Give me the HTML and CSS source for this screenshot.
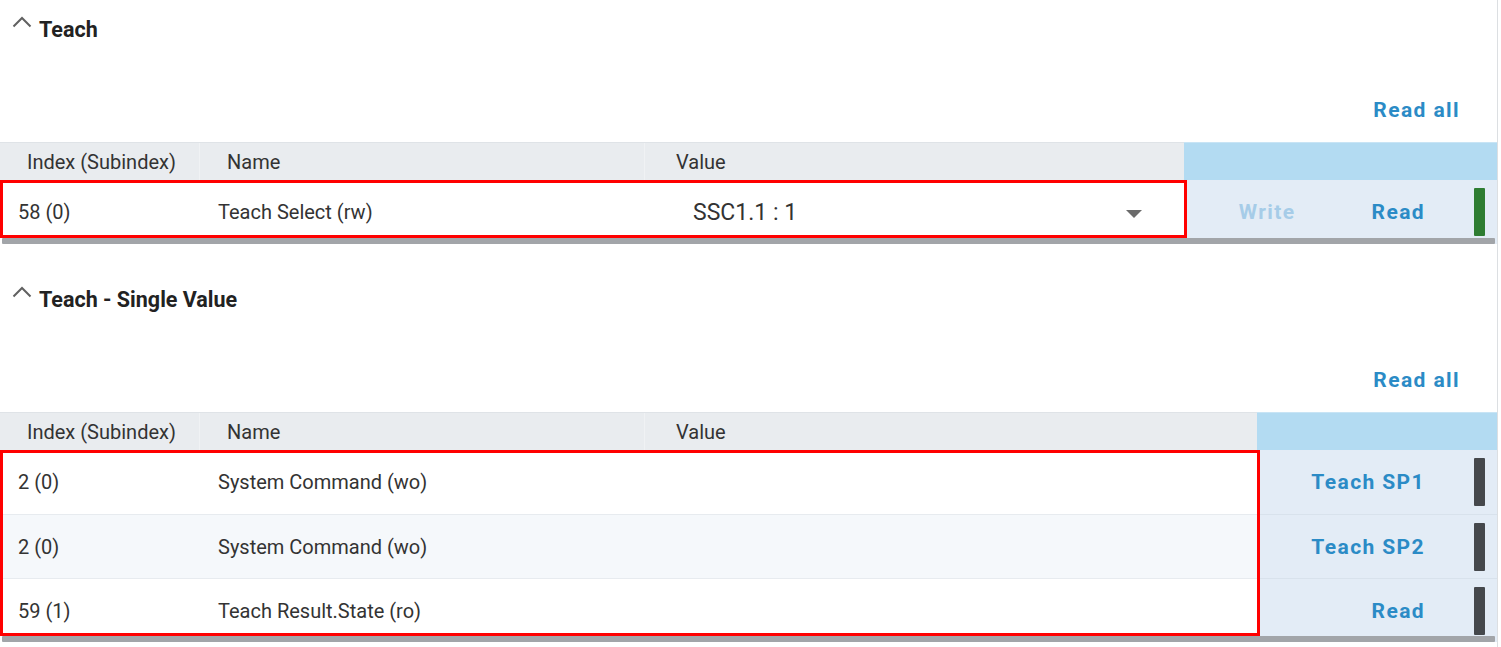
FILE: index.html
```html
<!DOCTYPE html>
<html lang="en">
<head>
<meta charset="utf-8">
<title>Teach</title>
<link rel="stylesheet" href="styles.css">
</head>
<body>
<div class="page">
  <section class="group">
    <div class="group-head">
      <svg class="chev" viewBox="0 0 20 12"><polyline points="1.5,10.5 10,2 18.5,10.5" fill="none" stroke="#616161" stroke-width="2"/></svg>
      <h2 class="group-title">Teach</h2>
    </div>
    <div class="toolbar"><button class="btn">Read all</button></div>
    <div class="table">
      <div class="main">
        <div class="thead">
          <div class="hc c-idx">Index (Subindex)</div>
          <div class="hc c-name">Name</div>
          <div class="hc c-val">Value</div>
        </div>
        <div class="tbody">
          <div class="row">
            <div class="bc c-idx">58 (0)</div>
            <div class="bc c-name">Teach Select (rw)</div>
            <div class="bc c-val select">
              <span class="select-text">SSC1.1 : 1</span>
              <svg class="caret" viewBox="0 0 16 8"><polygon points="0,0 16,0 8,8" fill="#6b6b6b"/></svg>
            </div>
          </div>
          <div class="highlight"></div>
        </div>
      </div>
      <div class="side side-wide">
        <div class="side-head"></div>
        <div class="action-row">
          <button class="btn disabled write">Write</button>
          <button class="btn">Read</button>
          <span class="bar ok"></span>
        </div>
      </div>
      <div class="scrollbar"></div>
    </div>
  </section>

  <section class="group second">
    <div class="group-head">
      <svg class="chev" viewBox="0 0 20 12"><polyline points="1.5,10.5 10,2 18.5,10.5" fill="none" stroke="#616161" stroke-width="2"/></svg>
      <h2 class="group-title">Teach - Single Value</h2>
    </div>
    <div class="toolbar"><button class="btn">Read all</button></div>
    <div class="table">
      <div class="main">
        <div class="thead">
          <div class="hc c-idx">Index (Subindex)</div>
          <div class="hc c-name">Name</div>
          <div class="hc c-val">Value</div>
        </div>
        <div class="tbody">
          <div class="row">
            <div class="bc c-idx">2 (0)</div>
            <div class="bc c-name">System Command (wo)</div>
            <div class="bc c-val"></div>
          </div>
          <div class="row alt">
            <div class="bc c-idx">2 (0)</div>
            <div class="bc c-name">System Command (wo)</div>
            <div class="bc c-val"></div>
          </div>
          <div class="row">
            <div class="bc c-idx">59 (1)</div>
            <div class="bc c-name">Teach Result.State (ro)</div>
            <div class="bc c-val"></div>
          </div>
          <div class="highlight"></div>
        </div>
      </div>
      <div class="side side-narrow">
        <div class="side-head"></div>
        <div class="action-row"><button class="btn">Teach SP1</button><span class="bar"></span></div>
        <div class="action-row"><button class="btn">Teach SP2</button><span class="bar"></span></div>
        <div class="action-row"><button class="btn">Read</button><span class="bar"></span></div>
      </div>
      <div class="scrollbar"></div>
    </div>
  </section>
</div>
</body>
</html>
```

FILE: styles.css
```css
* { box-sizing: border-box; }

body {
  margin: 0;
  background: #ffffff;
  color: #333333;
  font-family: Roboto, "Liberation Sans", Arial, sans-serif;
}

.page {
  width: 1498px;
  min-height: 647px;
  border-right: 1px solid #dcdfe2;
}

.group.second { margin-top: 26px; }

.group-head {
  height: 56px;
  display: flex;
  align-items: center;
}

.chev {
  width: 20px;
  height: 12px;
  margin-left: 12px;
  margin-right: 7px;
  margin-bottom: 13px;
  flex: none;
}

.group-title {
  margin: 0;
  margin-top: 2px;
  font-size: 21.5px;
  font-weight: 700;
  color: #222222;
}

.toolbar {
  display: flex;
  justify-content: flex-end;
  padding: 38px 37px 16px 0;
}

.btn {
  font-family: Roboto, "Liberation Sans", Arial, sans-serif;
  font-size: 21px;
  font-weight: 700;
  line-height: 32px;
  letter-spacing: 1.4px;
  color: #2b8bc6;
  background: none;
  border: 0;
  padding: 0;
  cursor: pointer;
}

.btn.disabled { color: #a6cce8; cursor: default; }

.table {
  position: relative;
  display: flex;
}

.main { flex: 1; min-width: 0; }

.thead {
  height: 38px;
  display: flex;
  background: #e9ecef;
  border-top: 1px solid #dfe3e7;
}

.hc {
  display: flex;
  align-items: center;
  font-size: 20px;
  color: #333333;
}

.c-idx { width: 200px; flex: none; }
.c-name { width: 445px; flex: none; }
.c-val { flex: 1; }

.hc.c-idx { padding-left: 27px; border-right: 1px solid #f0f2f4; }
.hc.c-name { padding-left: 27px; border-right: 1px solid #f0f2f4; }
.hc.c-val { padding-left: 31px; }

.tbody { position: relative; }

.row {
  height: 64px;
  display: flex;
  background: #ffffff;
}

.row + .row { border-top: 1px solid #e7ebef; }
.row.alt { background: #f5f8fb; }

.bc {
  display: flex;
  align-items: center;
  font-size: 20px;
  color: #333333;
}

.bc.c-idx { padding-left: 18px; }
.bc.c-name { padding-left: 18px; }

.select { padding-left: 48px; }
.select-text { font-size: 23px; color: #333333; }
.caret {
  width: 16px;
  height: 8px;
  margin-left: auto;
  margin-right: 42px;
  margin-top: 4px;
}

.highlight {
  position: absolute;
  top: 0;
  left: 0;
  right: -3px;
  bottom: 6px;
  border: 3px solid #ff0000;
  pointer-events: none;
}

.side { flex: none; }
.side-wide { width: 313px; }
.side-narrow { width: 240px; }

.side-head {
  height: 38px;
  background: #b3dbf2;
  border-top: 1px solid #c8e4f5;
}

.action-row {
  height: 64px;
  display: flex;
  align-items: center;
  justify-content: flex-end;
  padding-right: 12px;
  background: #e3ecf6;
}

.action-row + .action-row { border-top: 1px solid #d8e2ec; }

.action-row .write { margin-right: 76px; }

.bar {
  width: 11px;
  height: 48px;
  margin-left: 49px;
  background: #45484c;
  border-radius: 1px;
}

.bar.ok { background: #2e7d32; }

.scrollbar {
  position: absolute;
  left: 2px;
  right: 2px;
  bottom: 0;
  height: 6px;
  background: #a2a5a9;
  border-radius: 1px;
}
```
